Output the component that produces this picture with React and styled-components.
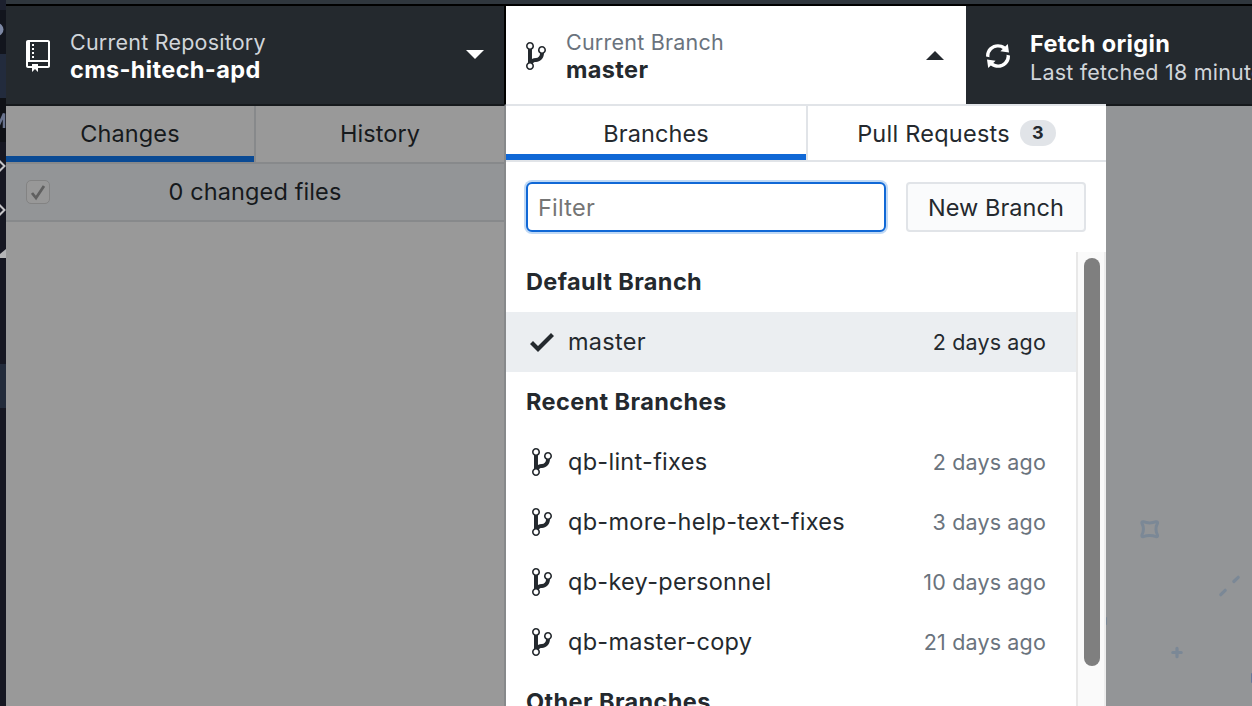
import React from "react";
import styled, { createGlobalStyle } from "styled-components";

const Global = createGlobalStyle`
  * { box-sizing: border-box; }
  body { margin: 0; overflow: hidden; background: #999; }
`;

const Screen = styled.div`
  display: flex;
  width: 1252px;
  height: 706px;
  overflow: hidden;
  font-family: Inter, "Liberation Sans", sans-serif;
  font-size: 23.5px;
  font-weight: 440;
  color: #24292e;
`;

const Backdrop = styled.div`
  width: 6px;
  flex: none;
  display: flex;
  flex-direction: column;
  overflow: hidden;
  background: #161722;
`;
const Strip = styled.div`
  height: ${(p) => p.$h}px;
  flex: none;
  background: ${(p) => p.$bg};
`;
const StripIcon = styled.svg`
  display: block;
`;

const Window = styled.div`
  flex: 1;
  min-width: 0;
  display: flex;
  flex-direction: column;
`;
const TitleBar = styled.div`
  height: 6px;
  flex: none;
  background: #2f363d;
  border-bottom: 2px solid #000;
`;
const Toolbar = styled.div`
  height: 98px;
  flex: none;
  display: flex;
  background: #24292e;
`;
const ToolbarButton = styled.div`
  display: flex;
  align-items: flex-start;
  flex: none;
  width: ${(p) => p.$w}px;
  padding: 34px ${(p) => (p.$open ? 22 : 20)}px 0 20px;
  background: ${(p) => (p.$open ? "#fff" : "#24292e")};
  color: ${(p) => (p.$open ? "#24292e" : "#fff")};
  border-right: ${(p) => (p.$divider ? "2px solid #000" : "0")};
  overflow: hidden;
`;
const Labels = styled.div`
  flex: 1;
  margin: ${(p) => p.$top || -12}px 0 0 20px;
  white-space: nowrap;
`;
const Caption = styled.div`
  font-size: 21.5px;
  line-height: 28px;
  letter-spacing: 0.22px;
  color: ${(p) => (p.$open ? "#6a737d" : "#d1d5da")};
`;
const Title = styled.div`
  font-size: 23.5px;
  line-height: ${(p) => p.$line || 27}px;
  font-weight: 650;
  letter-spacing: 0.36px;
`;
const Caret = styled.div`
  width: 18px;
  height: 9px;
  margin-top: ${(p) => (p.$up ? 11 : 10)}px;
  background: currentColor;
  clip-path: ${(p) => (p.$up ? "polygon(50% 0, 100% 100%, 0 100%)" : "polygon(0 0, 100% 0, 50% 100%)")};
`;

const Body = styled.div`
  flex: 1;
  min-height: 0;
  display: flex;
`;
const Sidebar = styled.div`
  width: 500px;
  flex: none;
  background: #999;
  border-top: 2px solid #16191c;
  border-right: 2px solid #87898b;
`;
const Tabs = styled.div`
  display: flex;
  height: ${(p) => p.$h}px;
  border-bottom: 2px solid ${(p) => p.$line};
`;
const Tab = styled.div`
  display: flex;
  align-items: center;
  justify-content: center;
  width: ${(p) => p.$w}px;
  height: ${(p) => p.$h}px;
  padding-bottom: ${(p) => p.$lift || 0}px;
  letter-spacing: ${(p) => p.$ls ?? 0.09}px;
  color: ${(p) => p.$ink || "#24292e"};
  box-shadow: ${(p) => (p.$active ? `inset 0 -6px ${p.$active}` : "none")};
  border-left: ${(p) => (p.$edge ? `2px solid ${p.$edge}` : "0")};
`;
const ChangesHeader = styled.div`
  display: flex;
  align-items: center;
  height: 58px;
  padding: 0 20px;
  background: #939597;
  border-bottom: 2px solid #87898b;
  color: #16191c;
`;
const CheckBox = styled.div`
  width: 24px;
  height: 24px;
  flex: none;
  border: 1.5px solid #838383;
  border-radius: 5px;
  background: #989898;
`;
const CheckMark = styled.svg`
  display: block;
`;
const FileCount = styled.div`
  flex: 1;
  padding: 0 24px 2px 0;
  text-align: center;
  letter-spacing: 0.12px;
`;

const Popover = styled.div`
  width: 600px;
  flex: none;
  background: #fff;
  border-top: 2px solid #e1e4e8;
  display: flex;
  flex-direction: column;
`;
const Counter = styled.span`
  margin-left: 10px;
  width: 36px;
  height: 26px;
  border-radius: 13px;
  background: #e1e4e8;
  font-size: 18px;
  font-weight: 650;
  line-height: 26px;
  text-align: center;
  letter-spacing: 0;
`;
const FilterRow = styled.div`
  display: flex;
  gap: 20px;
  padding: 20px;
  height: 90px;
  flex: none;
`;
const FilterInput = styled.input`
  width: 360px;
  height: 50px;
  padding: 0 10px;
  border: 2px solid #1068d6;
  border-radius: 6px;
  outline: none;
  box-shadow: 0 0 0 2px rgba(3, 102, 214, 0.25);
  font: inherit;
  letter-spacing: 0.25px;
  &::placeholder { color: #757575; opacity: 1; }
`;
const NewBranch = styled.button`
  width: 180px;
  height: 50px;
  padding: 0;
  border: 2px solid #e1e4e8;
  border-radius: 4px;
  background: #fafbfc;
  color: #24292e;
  font: inherit;
  letter-spacing: 0.04px;
`;
const ListArea = styled.div`
  flex: 1;
  min-height: 0;
  display: flex;
  overflow: hidden;
`;
const List = styled.div`
  flex: 1;
`;
const GroupTitle = styled.div`
  height: 60px;
  padding-left: 20px;
  line-height: 59px;
  font-weight: 650;
  letter-spacing: 0.4px;
`;
const Row = styled.div`
  display: flex;
  align-items: center;
  height: 60px;
  padding: 0 30px 0 20px;
  background: ${(p) => (p.$selected ? "#ebeef1" : "transparent")};
`;
const IconSlot = styled.span`
  width: 32px;
  margin-right: 10px;
  display: flex;
  justify-content: center;
`;
const BranchName = styled.span`
  flex: 1;
  padding-bottom: 2px;
  letter-spacing: 0.28px;
`;
const Age = styled.span`
  font-size: 21.5px;
  letter-spacing: 0.16px;
  color: ${(p) => (p.$selected ? "#24292e" : "#6a737d")};
`;
const ScrollTrack = styled.div`
  width: 30px;
  flex: none;
  padding: 6px 4px 0 6px;
  background: #fafafa;
  border-left: 2px solid #e8e8e8;
  border-right: 2px solid #ededed;
`;
const ScrollThumb = styled.div`
  width: 16px;
  height: 408px;
  border-radius: 8px;
  background: #7f7f7f;
`;
const Canvas = styled.div`
  flex: 1;
  min-width: 0;
  background: #939597;
  border-top: 2px solid #16191c;
`;

const PATHS = {
  repo: [12, "M4 9H3V8h1v1zm0-3H3v1h1V6zm0-2H3v1h1V4zm0-2H3v1h1V2zm8-1v12c0 .55-.45 1-1 1H6v2l-1.5-1.5L3 16v-2H1c-.55 0-1-.45-1-1V1c0-.55.45-1 1-1h10c.55 0 1 .45 1 1zm-1 10H1v2h2v-1h3v1h5v-2zm0-10H2v9h9V1z"],
  branch: [10, "M10 5c0-1.11-.89-2-2-2a1.993 1.993 0 0 0-1 3.72v.3c-.02.52-.23.98-.63 1.38-.4.4-.86.61-1.38.63-.83.02-1.48.16-2 .45V4.72a1.993 1.993 0 0 0-1-3.72C.88 1 0 1.89 0 3a2 2 0 0 0 1 1.72v6.56c-.59.35-1 .99-1 1.72 0 1.11.89 2 2 2 1.11 0 2-.89 2-2 0-.53-.2-1-.53-1.36.09-.06.48-.41.59-.47.25-.11.56-.17.94-.17 1.05-.05 1.95-.45 2.75-1.25S8.95 7.77 9 6.73h-.02C9.59 6.37 10 5.73 10 5zM2 1.8c.66 0 1.2.55 1.2 1.2 0 .65-.55 1.2-1.2 1.2C1.35 4.2.8 3.65.8 3c0-.65.55-1.2 1.2-1.2zm0 12.41c-.66 0-1.2-.55-1.2-1.2 0-.65.55-1.2 1.2-1.2.65 0 1.2.55 1.2 1.2 0 .65-.55 1.2-1.2 1.2zm6-8c-.66 0-1.2-.55-1.2-1.2 0-.65.55-1.2 1.2-1.2.65 0 1.2.55 1.2 1.2 0 .65-.55 1.2-1.2 1.2z"],
  sync: [12, "M10.24 7.4a4.15 4.15 0 0 1-1.2 3.6 4.346 4.346 0 0 1-5.41.54L4.8 10.4.5 9.8l.6 4.2 1.31-1.26c2.36 1.74 5.7 1.57 7.84-.54a5.876 5.876 0 0 0 1.74-4.46l-1.75-.34zM2.96 5a4.346 4.346 0 0 1 5.41-.54L7.2 5.6l4.3.6-.6-4.2-1.31 1.26c-2.36-1.74-5.7-1.57-7.85.54C.5 5.03-.06 6.65.01 8.26l1.75.35A4.17 4.17 0 0 1 2.96 5z"],
  check: [12, "M12 5l-8 8-4-4L1.5 7.5 4 10l6.5-6.5L12 5z"],
};
const Glyph = styled.svg`
  display: block;
  flex: none;
  fill: currentColor;
`;
const Icon = ({ name }) => {
  const [w, d] = PATHS[name];
  return (
    <Glyph width={w * 2} height="32" viewBox={`0 0 ${w} 16`}>
      <path d={d} />
    </Glyph>
  );
};

const RECENT = [
  ["qb-lint-fixes", "2 days ago"],
  ["qb-more-help-text-fixes", "3 days ago"],
  ["qb-key-personnel", "10 days ago"],
  ["qb-master-copy", "21 days ago"],
];

export default function App() {
  return (
    <Screen>
      <Global />
      <Backdrop>
        <Strip $h={10} $bg="#1c202e" />
        <Strip $h={44} $bg="#12151d">
          <StripIcon width="6" height="44"><circle cx="-3" cy="19.500" r="6.500" fill="#7c87a3" /></StripIcon>
        </Strip>
        <Strip $h={44} $bg="#222b3d" />
        <Strip $h={44} $bg="#0f1116">
          <StripIcon width="6" height="44"><path d="M-2 29L4 15.500V30" fill="none" stroke="#69738d" strokeWidth="2.500" /></StripIcon>
        </Strip>
        <Strip $h={222} $bg="#161722">
          <StripIcon width="6" height="222">
            <path d="M-1 18.500L4.500 24-1 29.500M-1 62.500L4.500 68-1 73.500" fill="none" stroke="#c5c5c8" strokeWidth="2" />
            <path d="M0 116V112L6 107V116Z" fill="#b5b5b7" />
          </StripIcon>
        </Strip>
        <Strip $h={44} $bg="#232b3b" />
      </Backdrop>
      <Window>
        <TitleBar />
        <Toolbar>
          <ToolbarButton $w={500} $divider>
            <Icon name="repo" />
            <Labels>
              <Caption>Current Repository</Caption>
              <Title>cms-hitech-apd</Title>
            </Labels>
            <Caret />
          </ToolbarButton>
          <ToolbarButton $w={460} $open>
            <Icon name="branch" />
            <Labels>
              <Caption $open>Current Branch</Caption>
              <Title>master</Title>
            </Labels>
            <Caret $up />
          </ToolbarButton>
          <ToolbarButton $w={286}>
            <Icon name="sync" />
            <Labels $top={-10}>
              <Title $line={28}>Fetch origin</Title>
              <Caption>Last fetched 18 minutes ago</Caption>
            </Labels>
          </ToolbarButton>
        </Toolbar>
        <Body>
          <Sidebar>
            <Tabs $h={58} $line="#87898b">
              <Tab $w={248} $h={56} $lift={2} $active="#0a4a94" $ink="#16191c">Changes</Tab>
              <Tab $w={250} $h={56} $lift={2} $edge="#87898b" $ink="#16191c">History</Tab>
            </Tabs>
            <ChangesHeader>
              <CheckBox>
                <CheckMark width="22" height="22" viewBox="0 0 22 22">
                  <path d="M5 12l4 5L17 5" fill="none" stroke="#606060" strokeWidth="2.800" />
                </CheckMark>
              </CheckBox>
              <FileCount>0 changed files</FileCount>
            </ChangesHeader>
          </Sidebar>
          <Popover>
            <Tabs $h={56} $line="#e1e4e8">
              <Tab $w={300} $h={54} $active="#1068d6">Branches</Tab>
              <Tab $w={299} $h={54} $ls={0.24} $edge="#e1e4e8">
                Pull Requests<Counter>3</Counter>
              </Tab>
            </Tabs>
            <FilterRow>
              <FilterInput placeholder="Filter" />
              <NewBranch>New Branch</NewBranch>
            </FilterRow>
            <ListArea>
              <List>
                <GroupTitle>Default Branch</GroupTitle>
                <Row $selected>
                  <IconSlot><Icon name="check" /></IconSlot>
                  <BranchName>master</BranchName>
                  <Age $selected>2 days ago</Age>
                </Row>
                <GroupTitle>Recent Branches</GroupTitle>
                {RECENT.map(([name, age]) => (
                  <Row key={name}>
                    <IconSlot><Icon name="branch" /></IconSlot>
                    <BranchName>{name}</BranchName>
                    <Age>{age}</Age>
                  </Row>
                ))}
                <GroupTitle>Other Branches</GroupTitle>
              </List>
              <ScrollTrack><ScrollThumb /></ScrollTrack>
            </ListArea>
          </Popover>
          <Canvas>
            <svg width="146" height="600" viewBox="1106 106 146 600" fill="none" stroke="#7b8896" strokeWidth="3.200" strokeLinecap="round" strokeLinejoin="round">
              <path d="M1143.300 521.700Q1149.700 524.200 1156.100 521.700Q1157.900 521.500 1157.500 523.300Q1154.400 529.200 1157.500 535.100Q1157.900 536.900 1156.100 536.700Q1149.700 534.200 1143.300 536.700Q1141.500 536.900 1141.900 535.100Q1145 529.200 1141.900 523.300Q1141.500 521.500 1143.300 521.700Z" strokeWidth="3" />
              <path d="M1220.800 594.700L1225.200 590.300M1233.800 581.500L1238.200 577.300" />
              <path d="M1172.800 652.500H1181.200M1177 648.300V656.700" />
              <path d="M1106 618V624" strokeWidth="2" />
              <path d="M1252 674V682" strokeWidth="2" stroke="#65779a" />
            </svg>
          </Canvas>
        </Body>
      </Window>
    </Screen>
  );
}
